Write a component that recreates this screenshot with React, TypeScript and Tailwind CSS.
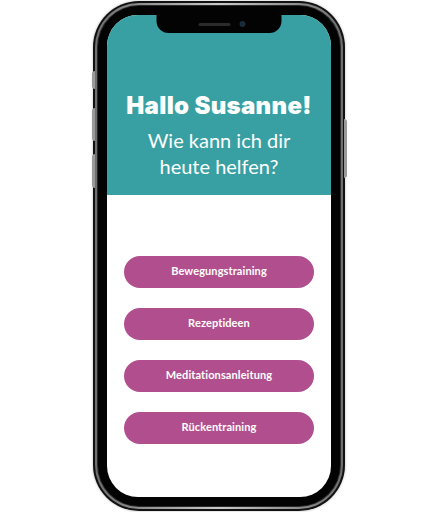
const options = ["Bewegungstraining", "Rezeptideen", "Meditationsanleitung", "Rückentraining"];

export default function App() {
  return (
    <div className="flex h-[512px] w-[438px] justify-center overflow-hidden bg-white pt-px font-['Lato',sans-serif]">
      <div className="relative h-[510px] w-[252px]">
        {/* side buttons */}
        <div className="absolute left-[-1px] top-[70px] h-[18px] w-[3px] rounded-l-sm bg-[#9a9a9a]" />
        <div className="absolute left-[-1px] top-[107px] h-[33px] w-[3px] rounded-l-sm bg-[#9a9a9a]" />
        <div className="absolute left-[-1px] top-[153px] h-[34px] w-[3px] rounded-l-sm bg-[#9a9a9a]" />
        <div className="absolute right-[-2px] top-[118px] h-[59px] w-[3px] rounded-r-sm bg-[#9a9a9a]" />

        <div className="h-full w-full rounded-[46px] bg-[#111] p-[2px] shadow-[0_0_3px_rgba(0,0,0,0.25)]">
          <div className="h-full w-full rounded-[44px] bg-gradient-to-r from-[#6e6e6e] via-[#c9c9c9] to-[#6e6e6e] p-[2px]">
            <div className="h-full w-full rounded-[42px] bg-[#2a2a2a] p-px">
              <div className="h-full w-full rounded-[41px] bg-[#030303] p-[9px]">
                <div className="relative flex h-full w-full flex-col overflow-hidden rounded-[31px] bg-white">
                  {/* notch */}
                  <div className="absolute left-1/2 top-0 z-10 flex h-[18px] w-[125px] -translate-x-1/2 items-center justify-center rounded-b-[12px] bg-[#030303]">
                    <div className="ml-[6px] h-[3px] w-[32px] rounded-full bg-[#2b2b2b]" />
                    <div className="ml-[9px] h-[6px] w-[6px] rounded-full bg-[#1c2a3a]" />
                  </div>

                  <div className="flex h-[180px] flex-col items-center bg-[#38a0a3] pt-[77px] text-white">
                    <h1 className="font-['Inter',sans-serif] text-[24px] font-black leading-[28px] tracking-[0.3px]">
                      Hallo Susanne!
                    </h1>
                    <p className="mt-[7px] text-center text-[20px] leading-[26px]">
                      Wie kann ich dir
                      <br />
                      heute helfen?
                    </p>
                  </div>

                  <div className="flex flex-col items-center gap-[20px] pt-[61px]">
                    {options.map((o) => (
                      <button
                        key={o}
                        className="h-[32px] w-[190px] rounded-full bg-[#b14f8e] pb-[2px] text-[11px] font-bold tracking-[0.1px] text-white"
                      >
                        {o}
                      </button>
                    ))}
                  </div>
                </div>
              </div>
            </div>
          </div>
        </div>
      </div>
    </div>
  );
}
